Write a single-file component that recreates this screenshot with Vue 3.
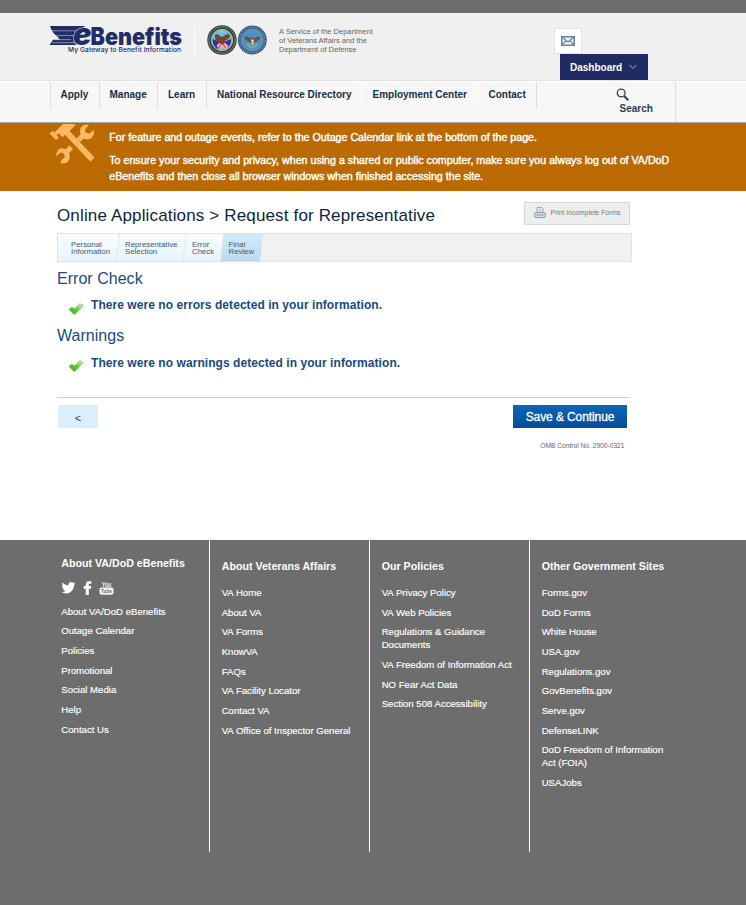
<script setup>
const nav = [
  { label: 'Apply', w: 50, line: 'grey' },
  { label: 'Manage', w: 58, line: 'grey' },
  { label: 'Learn', w: 49, line: 'grey' },
  { label: 'National Resource Directory', w: 155, line: 'white' },
  { label: 'Employment Center', w: 116, line: 'white' },
  { label: 'Contact', w: 59, line: 'grey' },
]
const steps = [
  ['Personal', 'Information'],
  ['Representative', 'Selection'],
  ['Error', 'Check'],
  ['Final', 'Review'],
]
const checks = [
  { title: 'Error Check', text: 'There were no errors detected in your information.', cls: 'errors' },
  { title: 'Warnings', text: 'There were no warnings detected in your information.', cls: 'warnings' },
]
const columns = [
  {
    title: 'About VA/DoD eBenefits', social: true,
    links: ['About VA/DoD eBenefits', 'Outage Calendar', 'Policies', 'Promotional', 'Social Media', 'Help', 'Contact Us'],
  },
  {
    title: 'About Veterans Affairs',
    links: ['VA Home', 'About VA', 'VA Forms', 'KnowVA', 'FAQs', 'VA Facility Locator', 'Contact VA', 'VA Office of Inspector General'],
  },
  {
    title: 'Our Policies',
    links: ['VA Privacy Policy', 'VA Web Policies', 'Regulations & Guidance\nDocuments', 'VA Freedom of Information Act', 'NO Fear Act Data', 'Section 508 Accessibility'],
  },
  {
    title: 'Other Government Sites',
    links: ['Forms.gov', 'DoD Forms', 'White House', 'USA.gov', 'Regulations.gov', 'GovBenefits.gov', 'Serve.gov', 'DefenseLINK', 'DoD Freedom of Information\nAct (FOIA)', 'USAJobs'],
  },
]
</script>

<template>
  <div class="page">
    <div class="topbar"></div>
    <header class="header">
      <svg class="logo" width="136" height="34" viewBox="0 0 136 34">
        <path d="M1 1H36L30 8L27 20H.5L4 14.800H11L8 11Q3 8 1 1Z" fill="#222c66" />
        <path d="M3 5.800H27M8 10.600H26M5 14.600H22M3 17.700H25" stroke="#c9cddb" stroke-width=".6" />
        <text class="logo-e" x="24" y="19.500" textLength="18.500" lengthAdjust="spacingAndGlyphs">e</text>
        <text class="logo-name" x="41.500" y="19.500" textLength="91.500" lengthAdjust="spacingAndGlyphs">Benefits</text>
        <text class="logo-tag" x="19" y="27.400" textLength="113" lengthAdjust="spacing">My Gateway to Benefit Information</text>
      </svg>
      <div class="logo-rule"></div>
      <svg class="seals" width="60" height="30" viewBox="0 0 60 30">
        <circle cx="15" cy="15" r="14.700" fill="#29414f" />
        <circle cx="15" cy="15" r="13.300" fill="none" stroke="#c8a657" stroke-width=".6" />
        <circle cx="15" cy="15" r="10.700" fill="#62c0ea" stroke="#d0b455" stroke-width="1" />
        <path d="M5.500 14q-.5 6 5 10l4-3 4 3q6-3 5.700-10l-5 2-4 3-4-3z" fill="#34348f" />
        <path d="M11.500 18l-2 3 4 4 2-3 3 3 3-4-3-3-4 1z" fill="#efa5c2" />
        <path d="M13 20l-1 3M16.500 20l2 3" stroke="#cf4056" stroke-width="1" />
        <path d="M8 10q2-2 5 1l2 1 2-1q3-3 5.500-1.500 1 3-1.500 4.500l-3 2-1 3-2 1-3-3-3-2q-1.500-2-1-5z" fill="#7d4522" />
        <circle cx="15" cy="6.500" r="1.300" fill="#b9d98c" />
        <circle cx="45.300" cy="15" r="14.500" fill="#3b5f88" />
        <circle cx="45.300" cy="15" r="12.700" fill="none" stroke="#8199ae" stroke-width="1.200" stroke-dasharray="1 1.200" />
        <circle cx="45.300" cy="15" r="10.900" fill="#4f93c6" stroke="#7f9aa6" stroke-width=".7" />
        <path d="M37 11.500q4-.5 6.500 2l1.800-1.500 1.800 1.500q2.500-2.500 6.500-2-1 4-5 5.500l-3.300 2-3.300-2q-4-1.500-5-5.500z" fill="#754d40" />
        <path d="M44 14.500h3v4.500l-1.500 1.500-1.500-1.500z" fill="#d9d1cf" />
        <path d="M44.700 16v3.500M46.300 16v3.500" stroke="#b65359" stroke-width=".6" />
        <path d="M40.500 18.500q1.500 3.500 5 4 3.500-.5 5-4" fill="none" stroke="#a9b785" stroke-width="1.100" />
      </svg>
      <div class="service">A Service of the Department<br />of Veterans Affairs and the<br />Department of Defense</div>
      <div class="account">
        <div class="mail">
          <svg width="14" height="10" viewBox="0 0 14 10" fill="none" stroke="#6283a3">
            <rect x=".75" y=".75" width="12.500" height="8.500" stroke-width="1.500" fill="#f1f5f8" />
            <path d="M1 1L7 6L13 1M1 9L5.200 4.600M13 9L8.800 4.600" stroke-width="1.200" />
          </svg>
        </div>
        <div class="dashboard">
          Dashboard
          <svg width="8" height="6" viewBox="0 0 8 6" fill="none" stroke="#a9aeca"><path d="M.5 .8L4 4.500L7.500 .8" /></svg>
        </div>
      </div>
    </header>

    <nav class="nav">
      <a v-for="n in nav" :key="n.label" class="nav-item" :class="n.line" :style="{ width: n.w + 'px' }">{{ n.label }}</a>
      <div class="search">
        <svg width="14" height="14" viewBox="0 0 14 14" fill="none" stroke="#2c4260">
          <circle cx="5.200" cy="5" r="3.900" stroke-width="1.300" />
          <path d="M8.200 8L12.300 12.300" stroke-width="2" />
        </svg>
        <span>Search</span>
      </div>
    </nav>

    <section class="banner">
      <svg class="tools" width="48" height="42" viewBox="0 0 48 42">
        <g fill="#ffb862">
          <path d="M14 1H22L27 1.400L20.500 8L45.500 34.500L41.500 38.800L16 11.800L13.500 14.200L10.500 11Q10.500 9 7.500 12L10 14.600L7 17L.5 10.500L3.500 8L5.500 9.500Z" />
          <path d="M38 1.500Q31.500 2 31 7.500L31.500 11.500L27.500 15.500L31 19L35 15.500Q41.500 18.500 44.800 11.500L45 6.500L40.500 10.500L36.500 9.500L35.800 6.500L40 2Z" />
          <path d="M20.500 22.500L16.500 26.500Q10 23 7.500 30V33.500L11.500 29.500L14.500 30.200L16 33.500L11.500 38.500L12 40.500Q20 41 21 34.500L20 30L24 26Z" />
        </g>
      </svg>
      <div class="banner-text">
        <p>For feature and outage events, refer to the Outage Calendar link at the bottom of the page.</p>
        <p>To ensure your security and privacy, when using a shared or public computer, make sure you always log out of VA/DoD<br />eBenefits and then close all browser windows when finished accessing the site.</p>
      </div>
    </section>

    <main class="main">
      <div class="title-row">
        <h1>Online Applications &gt; Request for Representative</h1>
        <button class="print">
          <svg width="12" height="12" viewBox="0 0 12 12">
            <path d="M3 6V.6H8L9 2V6" fill="#f8fafb" stroke="#94a3ad" />
            <path d="M4.500 2.500H7M4.500 4.200H7.500" stroke="#94a3ad" stroke-width=".8" />
            <rect x=".6" y="5.600" width="10.800" height="5" rx="1.500" fill="#dae1e6" stroke="#8797a3" />
            <path d="M2.300 8H9.700" stroke="#8797a3" />
          </svg>
          <span>Print Incomplete Forms</span>
        </button>
      </div>

      <div class="steps">
        <svg class="steps-bg" width="206" height="27" viewBox="0 0 206 27">
          <defs>
            <linearGradient id="pale" x1="0" y1="0" x2="0" y2="1"><stop stop-color="#fafdfe" /><stop offset="1" stop-color="#e6f4fd" /></linearGradient>
            <linearGradient id="active" x1="0" y1="0" x2="0" y2="1"><stop stop-color="#d4eafa" /><stop offset="1" stop-color="#bad9f0" /></linearGradient>
          </defs>
          <path d="M0 0H165L162 27H0Z" fill="url(#pale)" />
          <path d="M165.500 0H205L202 27H162.500Z" fill="url(#active)" />
          <path d="M61.500 0L58.500 27M128 0L125 27" stroke="#e6e9eb" stroke-width="1.300" />
        </svg>
        <div v-for="(s, i) in steps" :key="i" class="step" :class="'step' + i">{{ s[0] }}<br />{{ s[1] }}</div>
      </div>

      <section v-for="c in checks" :key="c.title" class="check" :class="c.cls">
        <h2>{{ c.title }}</h2>
        <div class="message">
          <svg width="14" height="12" viewBox="0 0 14 12">
            <defs><linearGradient id="tick" x1="0" y1="1" x2="1" y2="0"><stop stop-color="#2fb010" /><stop offset=".5" stop-color="#58cc30" /><stop offset="1" stop-color="#e3f4df" /></linearGradient></defs>
            <path d="M.5 5.800L3 4.300L5.600 5.800L10.800 .7L13.500 1.800V3.500L6 11.300L4.800 11.200L.5 7Z" fill="url(#tick)" stroke="#69a95c" stroke-width=".6" stroke-linejoin="round" />
          </svg>
          <strong>{{ c.text }}</strong>
        </div>
      </section>

      <div class="actions">
        <button class="back">&lt;</button>
        <button class="save">Save &amp; Continue</button>
      </div>
      <div class="omb">OMB Control No. 2900-0321</div>
    </main>

    <footer class="footer">
      <div v-for="c in columns" :key="c.title" class="col" :class="{ first: c.social }">
        <h3>{{ c.title }}</h3>
        <div v-if="c.social" class="social">
          <svg width="15" height="14" viewBox="0 0 15 14"><path fill="#fff" d="M14.600 2.500l-1.500 1.200c0 5-3.500 8.700-8 8.700-1.700 0-3.200-.4-4.500-1.300 1.600.1 2.900-.3 4-1.100-1.300-.1-2.200-.9-2.600-2h1.200C1.900 7.500 1 6.400 1 4.900l1.200.3C1.100 4.300.8 2.700 1.500 1.400 3 3.200 5 4.200 7.500 4.300 7.200 2.500 8.500 1 10.200 1c.9 0 1.600.3 2.200.9l1.700-.6-1.100 1.500z" /></svg>
          <svg width="9" height="14" viewBox="0 0 9 14"><path fill="#fff" d="M2.700 14V7.700H.7V5.100h2V3.400C2.700 1.200 3.900.2 5.800.2h2.600v2.600H6.900c-.8 0-1.100.3-1.100 1v1.300H8.300L8 7.700H5.800V14z" /></svg>
          <svg width="15" height="14" viewBox="0 0 15 14">
            <text class="you" x="2.800" y="5.800" textLength="9.500" lengthAdjust="spacingAndGlyphs">You</text>
            <rect x=".5" y="6.400" width="14" height="7.400" rx="2" fill="#f2f2f2" />
            <text class="tube" x="2" y="12.400" textLength="11" lengthAdjust="spacingAndGlyphs">Tube</text>
          </svg>
        </div>
        <ul>
          <li v-for="l in c.links" :key="l">{{ l }}</li>
        </ul>
      </div>
    </footer>
  </div>
</template>

<style>
body { background: #fff; }
</style>

<style scoped>
.page { width: 746px; height: 905px; overflow: hidden; display: flex; flex-direction: column; font-family: "Liberation Sans", Arial, sans-serif; color: #333; }
h1, h2, h3, p, ul { margin: 0; padding: 0; font-weight: 400; }
button { font-family: inherit; border: 0; padding: 0; margin: 0; border-radius: 0; }
svg { display: block; flex: none; }
.topbar { height: 13px; background: #6d6d6d; flex: none; }

.header { height: 67px; flex: none; background: #f0f0f0; border-bottom: 1px solid #e1e1e1; display: flex; align-items: flex-start; padding-left: 49px; }
.logo { margin-top: 12px; overflow: visible; }
.logo text { fill: #222c66; }
.logo-e { font: italic 900 30px Inter, sans-serif; stroke: #f0f0f0; stroke-width: 1px; paint-order: stroke; }
.logo-name { font: 900 24px Inter, sans-serif; }
.logo-tag { font: 500 6.600px Inter, sans-serif; }
.logo-rule { width: 1px; height: 31px; margin: 12px 0 0 9px; background: #fff; }
.seals { margin: 12px 0 0 12px; }
.service { margin: 14px 0 0 12px; width: 110px; font-size: 7.500px; line-height: 9px; color: #666; white-space: nowrap; }
.account { margin: 15px 0 0 165px; width: 94px; }
.mail { width: 26px; height: 24px; border: 1px solid #e3e3e3; background: #fff; display: flex; align-items: center; justify-content: center; }
.dashboard { margin-left: 6px; width: 78px; padding-left: 10px; height: 26px; line-height: 25px; background: #202a63; color: #fff; font-size: 10px; font-weight: 700; display: flex; align-items: center; gap: 7px; }

.nav { height: 40px; flex: none; border-top: 1px solid #fff; border-bottom: 1px solid #ababab; background: #f7f7f7; display: flex; padding-left: 50px; }
.nav-item { box-sizing: border-box; height: 27px; line-height: 26px; padding-left: 10px; border-right: 1px solid #dedede; font-size: 10px; font-weight: 700; color: #14304a; white-space: nowrap; }
.nav-item:first-child { border-left: 1px solid #dedede; padding-left: 9.500px; }
.nav-item:nth-child(2) { padding-left: 9.500px; }
.nav-item:nth-child(5), .nav-item:nth-child(6) { padding-left: 10.500px; }
.nav-item.white { border-right-color: #fff; }
.search { margin-left: 79px; width: 59px; border-right: 1px solid #dedede; display: flex; flex-direction: column; padding-top: 6px; font-size: 10px; font-weight: 700; color: #2c3e55; }
.search span { line-height: 12px; margin: 1px 0 0 3.500px; }

.banner { height: 68px; flex: none; background: #bb6a03; display: flex; }
.tools { margin-left: 49px; }
.banner-text { margin: 6px 0 0 12.300px; color: #fff; font-size: 10.670px; -webkit-text-stroke: .4px #fff; line-height: 16px; white-space: nowrap; }
.banner-text p + p { margin-top: 7px; }

.main { height: 349px; flex: none; padding-left: 57px; box-sizing: border-box; width: 632px; }
.title-row { display: flex; justify-content: space-between; padding: 11px 2px 0 0; height: 31px; }
h1 { font-size: 17px; letter-spacing: .15px; line-height: 27px; color: #112440; white-space: nowrap; }
.print { width: 106px; height: 23px; border: 1px solid #d9d9d9; background: #eee; display: flex; align-items: center; gap: 4.500px; padding: 0 0 2px 9px; font-size: 6.750px; color: #777; white-space: nowrap; }
.steps { display: grid; grid-template-columns: 54px 67px 37px 1fr; height: 27px; border: 1px solid #e1e1e1; background: #f1f1f1; }
.steps-bg { grid-area: 1 / 1 / 2 / 5; }
.step { grid-row: 1; padding: 7px 0 0 13px; font-size: 7.800px; line-height: 7px; color: #44586c; white-space: nowrap; z-index: 1; }
.step0 { grid-column: 1; }
.step1 { grid-column: 2; }
.step2 { grid-column: 3; }
.step3 { grid-column: 4; padding-left: 12.500px; }
h2 { font-size: 16px; line-height: 20px; letter-spacing: .03px; color: #194a7e; }
.check { padding-top: 7px; height: 50px; }
.warnings { height: 65px; }
.message { display: flex; padding: 8px 0 0 12px; gap: 8px; }
.message svg { margin-top: 6px; }
.message strong { font-size: 12px; letter-spacing: .06px; line-height: 16px; color: #184a7d; white-space: nowrap; }
.warnings .message { padding-top: 9px; }
.warnings .message svg { margin-top: 5px; }
.actions { width: 573px; box-sizing: border-box; margin-top: 6px; border-top: 1px solid #ccc; padding: 7px 3px 0 1px; display: flex; justify-content: space-between; }
.back { width: 40px; height: 23px; background: #dbeefc; color: #333c52; font-size: 11px; padding-top: 2px; }
.save { width: 114px; height: 23px; background: linear-gradient(#0c67b5, #084b99); color: #fff; font-size: 12px; letter-spacing: -.1px; -webkit-text-stroke: .3px #fff; }
.omb { text-align: right; padding-right: 7.500px; margin-top: 14px; line-height: 8px; font-size: 6.650px; color: #666; }

.footer { flex: 1; background: #6d6d6d; color: #fff; display: flex; padding-left: 50px; }
.col { width: 160px; height: 312px; box-sizing: border-box; border-left: 1px solid #fff; padding: 19px 0 0 11.700px; }
.col.first { border-left: 0; padding: 16px 0 0 11.300px; width: 159px; }
h3 { font-size: 10.670px; font-weight: 700; line-height: 14px; white-space: nowrap; }
.social { display: flex; gap: 7px; margin: 11px 0 9.700px; }
ul { list-style: none; margin-top: 13px; }
.first ul { margin-top: 0; }
li { font-size: 9.600px; line-height: 13px; margin-bottom: 6.670px; white-space: pre; -webkit-text-stroke: .15px #fff; }
.you { font: 700 6.500px "Liberation Sans", sans-serif; fill: #eee; }
.tube { font: 700 6px "Liberation Sans", sans-serif; fill: #6d6d6d; }
</style>
